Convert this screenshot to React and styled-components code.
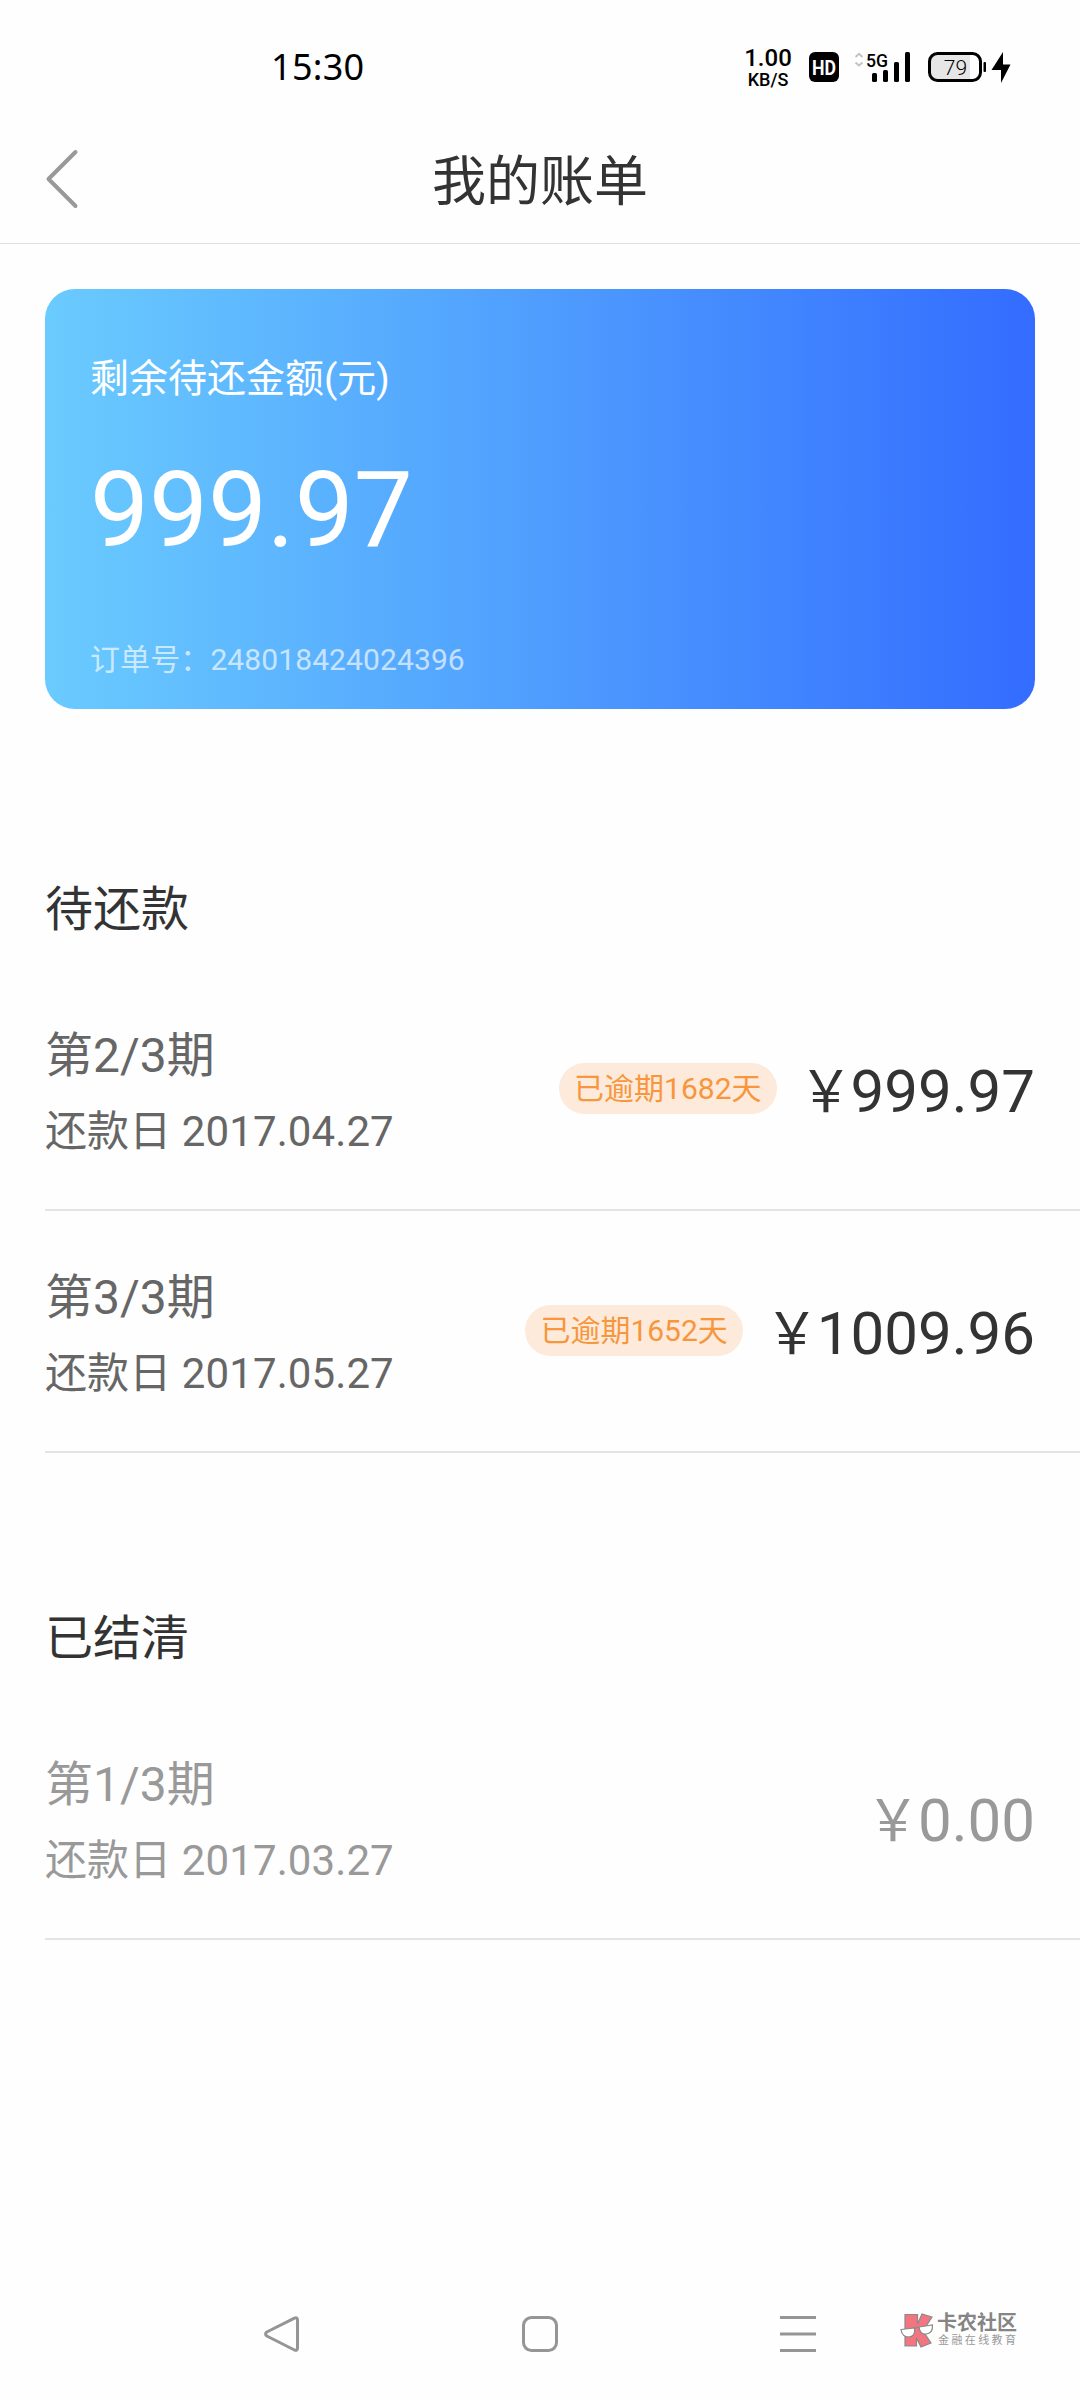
import React from 'react'
import styled, { createGlobalStyle } from 'styled-components'

const GlobalStyle = createGlobalStyle`
    * {
        box-sizing: border-box;
    }
    body {
        margin: 0;
        background: #fefefe;
        font-family: Roboto, "Noto Sans CJK SC", sans-serif;
    }
`

const Page = styled.div`
    width: 1080px;
    height: 2400px;
    display: flex;
    flex-direction: column;
    overflow: hidden;
`

//-------------------------------------------Status bar---------------------------------------
const StatusBar = styled.div`
    height: 134px;
    padding: 0 68px 0 271px;
    display: flex;
    align-items: center;
    justify-content: space-between;
`

const Clock = styled.div`
    font: 400 36px/50px "Noto Sans", sans-serif;
    letter-spacing: .3px;
    color: #000;
`

const StatusIcons = styled.div`
    display: flex;
    align-items: center;
`

const NetSpeed = styled.div`
    width: 50px;
    padding-top: 2px;
    display: flex;
    flex-direction: column;
    align-items: center;
    color: #000;
    white-space: nowrap;
`

const SpeedValue = styled.span`
    font: 500 24px/23px Roboto, sans-serif;
`

const SpeedUnit = styled.span`
    font: 500 18px/19px Roboto, sans-serif;
`

const HdBadge = styled.svg`
    margin-left: 16px;
`

const Signal = styled.svg`
    margin-left: 15px;
`

const Battery = styled.svg`
    margin-left: 17px;
`

function Status () {
    return (
        <StatusBar>
            <Clock>15:30</Clock>
            <StatusIcons>
                <NetSpeed>
                    <SpeedValue>1.00</SpeedValue>
                    <SpeedUnit>KB/S</SpeedUnit>
                </NetSpeed>
                <HdBadge width="30" height="30" viewBox="0 0 30 30">
                    <rect width="30" height="30" rx="6" />
                    <text x="3" y="22.500" fill="#fff" fontFamily="Roboto" fontSize="21" fontWeight="700" textLength="24" lengthAdjust="spacingAndGlyphs">HD</text>
                </HdBadge>
                <Signal width="57" height="42" viewBox="0 -6 57 42">
                    <path d="M1.500 5 L5 1.800 L8.500 5 M1.500 10.500 L5 13.500 L8.500 10.500" fill="none" stroke="#c4c4c4" strokeWidth="2" />
                    <text x="12" y="14.500" fontFamily="Roboto" fontSize="19" fontWeight="500" textLength="22" lengthAdjust="spacingAndGlyphs">5G</text>
                    <rect x="18" y="21" width="5" height="9" rx="1.500" />
                    <rect x="29" y="18" width="5" height="12" rx="1.500" />
                    <rect x="40" y="10" width="5" height="20" rx="1.500" />
                    <rect x="51" y="0" width="5" height="30" rx="1.500" />
                </Signal>
                <Battery width="84" height="32" viewBox="0 0 84 32">
                    <rect x="3" y="4" width="39" height="24" fill="#e6e6e6" />
                    <rect x="1.500" y="2.500" width="51" height="27" rx="8" fill="none" stroke="#000" strokeWidth="3" />
                    <rect x="55.500" y="11" width="2.500" height="10" rx="1" />
                    <text x="27.500" y="23.500" textAnchor="middle" fontFamily="Roboto" fontSize="21" fontWeight="300">79</text>
                    <path d="M75 1 L63.500 19 H73 V32 L82.500 13.500 H75 Z" />
                </Battery>
            </StatusIcons>
        </StatusBar>
    )
}

//-------------------------------------------Header---------------------------------------
const Header = styled.header`
    height: 110px;
    padding: 0 45px 20px;
    display: grid;
    grid-template-columns: 60px 1fr 60px;
    align-items: center;
    border-bottom: 1px solid #e1e1e1;
`

const Title = styled.h1`
    margin: 0;
    padding-top: 9px;
    font-size: 54px;
    line-height: 60px;
    font-weight: 400;
    color: #333;
    text-align: center;
`

//-------------------------------------------Balance card---------------------------------------
const Card = styled.section`
    height: 420px;
    margin: 45px 45px 0;
    padding: 60px 45px 29px;
    border-radius: 30px;
    background: linear-gradient(90deg, #6acbfe, #54a7fe 40%, #336cff);
    color: #fff;
    display: flex;
    flex-direction: column;
`

const CardLabel = styled.div`
    font-size: 39px;
    line-height: 60px;
`

const CardAmount = styled.div`
    margin-top: 40px;
    font-size: 105px;
    line-height: 124px;
`

const OrderNo = styled.div`
    margin-top: auto;
    font-size: 30px;
    line-height: 40px;
    letter-spacing: .1px;
    opacity: .65;
`

//-------------------------------------------Bill list---------------------------------------
const Group = styled.section`
    margin-top: ${({ $gap }) => $gap}px;
    padding-left: 45px;
`

const GroupTitle = styled.h2`
    margin: 0;
    font-size: 48px;
    line-height: 60px;
    font-weight: 400;
    color: #333;
`

const BillList = styled.div`
    margin-top: 29px;
`

const Bill = styled.div`
    height: 242px;
    padding-right: 45px;
    border-bottom: 2px solid #e4e4e4;
    color: ${({ $settled }) => ($settled ? '#999' : '#666')};
    display: flex;
    align-items: center;
`

const BillInfo = styled.div`
    flex: 1;
    padding-top: 9px;
`

const Period = styled.div`
    font-size: 48px;
    line-height: 76px;
`

const DueDate = styled.div`
    font-size: 42px;
    line-height: 76px;
    letter-spacing: .1px;
`

const Overdue = styled.div`
    height: 51px;
    margin-bottom: 1px;
    padding: 1px 15px 0;
    border-radius: 26px;
    background: #fdeada;
    color: #f7963c;
    font-size: 30px;
    line-height: 50px;
`

const Amount = styled.div`
    margin-left: 20px;
    padding-top: 5px;
    font-size: 60px;
    line-height: 76px;
    color: ${({ $settled }) => ($settled ? '#999' : '#333')};
`

const Currency = styled.span`
    display: inline-block;
    width: 54px;
    font-size: 58px;
    line-height: 60px;
    transform: scaleX(.92);
`

const pending = [
    { period: '第2/3期', date: '2017.04.27', overdue: 1682, amount: '999.97' },
    { period: '第3/3期', date: '2017.05.27', overdue: 1652, amount: '1009.96' },
]

const settled = [
    { period: '第1/3期', date: '2017.03.27', amount: '0.00' },
]

function Bills ({title, bills, gap, isSettled}) {
    return (
        <Group $gap={gap}>
            <GroupTitle>{title}</GroupTitle>
            <BillList>
                {bills.map(bill => (
                    <Bill key={bill.period} $settled={isSettled}>
                        <BillInfo>
                            <Period>{bill.period}</Period>
                            <DueDate>还款日 {bill.date}</DueDate>
                        </BillInfo>
                        {bill.overdue && <Overdue>已逾期{bill.overdue}天</Overdue>}
                        <Amount $settled={isSettled}><Currency>￥</Currency>{bill.amount}</Amount>
                    </Bill>
                ))}
            </BillList>
        </Group>
    )
}

//-------------------------------------------Navigation bar---------------------------------------
const NavBar = styled.nav`
    height: 132px;
    margin-top: auto;
    padding-left: 263px;
    display: flex;
    align-items: center;
`

const NavIcon = styled.svg`
    flex-shrink: 0;
    margin-right: ${({ $gap }) => $gap}px;
    fill: none;
    stroke: #959595;
    stroke-width: 3;
    stroke-linejoin: round;
`

const Brand = styled.div`
    display: flex;
    align-items: center;
    margin-top: -7px;
`

const BrandText = styled.div`
    margin-left: 3px;
    white-space: nowrap;
`

const BrandName = styled.div`
    font-size: 20px;
    line-height: 21px;
    font-weight: 700;
    color: #858585;
`

const BrandSlogan = styled.div`
    font-size: 11px;
    line-height: 14px;
    letter-spacing: 2.400px;
    padding-left: 1px;
    color: #999;
`

function Navigation () {
    return (
        <NavBar>
            <NavIcon $gap={221} width="38" height="38" viewBox="0 0 38 38">
                <path d="M31.500 3.200 L3.800 17 Q1.300 19 3.800 21 L31.500 35 Q34.500 36 34.500 33 V5 Q34.500 2 31.500 3.200 Z" />
            </NavIcon>
            <NavIcon $gap={220} width="38" height="38" viewBox="0 0 38 38">
                <rect x="1.500" y="2.500" width="33" height="33" rx="8" />
            </NavIcon>
            <NavIcon $gap={82} width="38" height="38" viewBox="0 0 38 38">
                <path d="M0 2.500 H36 M0 19 H36 M0 35.500 H36" />
            </NavIcon>
            <Brand>
                <svg width="34" height="36" viewBox="0 0 34 36">
                    <g fill="#f37580" stroke="#8a8a8a" strokeWidth="1.200">
                        <path d="M5 1.500 H17.500 V11 L22 1 L32 4 L23 18 L31 30 L21 34 L16.500 25 V33 H5 Z" />
                    </g>
                    <g fill="#fff" stroke="#8a8a8a" strokeWidth="1.200">
                        <path d="M1 16.500 L14.500 15 Q16 23 9 24 Q2 24 1 16.500 Z" />
                        <path d="M19 14 L32.500 12 Q33 20 26.500 21 Q20 22 19 14 Z" />
                        <path d="M14.500 16 Q16.500 13 19 15" fill="none" />
                    </g>
                </svg>
                <BrandText>
                    <BrandName>卡农社区</BrandName>
                    <BrandSlogan>金融在线教育</BrandSlogan>
                </BrandText>
            </Brand>
        </NavBar>
    )
}

export default function App () {
    return (
        <Page>
            <GlobalStyle />
            <Status />
            <Header>
                <svg width="34" height="60" viewBox="0 0 34 60" fill="none" stroke="#999" strokeWidth="4" strokeLinecap="round" strokeLinejoin="round">
                    <path d="M30.500 3 L3.500 30 L30.500 57" />
                </svg>
                <Title>我的账单</Title>
            </Header>
            <Card>
                <CardLabel>剩余待还金额(元)</CardLabel>
                <CardAmount>999.97</CardAmount>
                <OrderNo>订单号：248018424024396</OrderNo>
            </Card>
            <Bills title="待还款" bills={pending} gap={171} />
            <Bills title="已结清" bills={settled} gap={156} isSettled />
            <Navigation />
        </Page>
    )
}
